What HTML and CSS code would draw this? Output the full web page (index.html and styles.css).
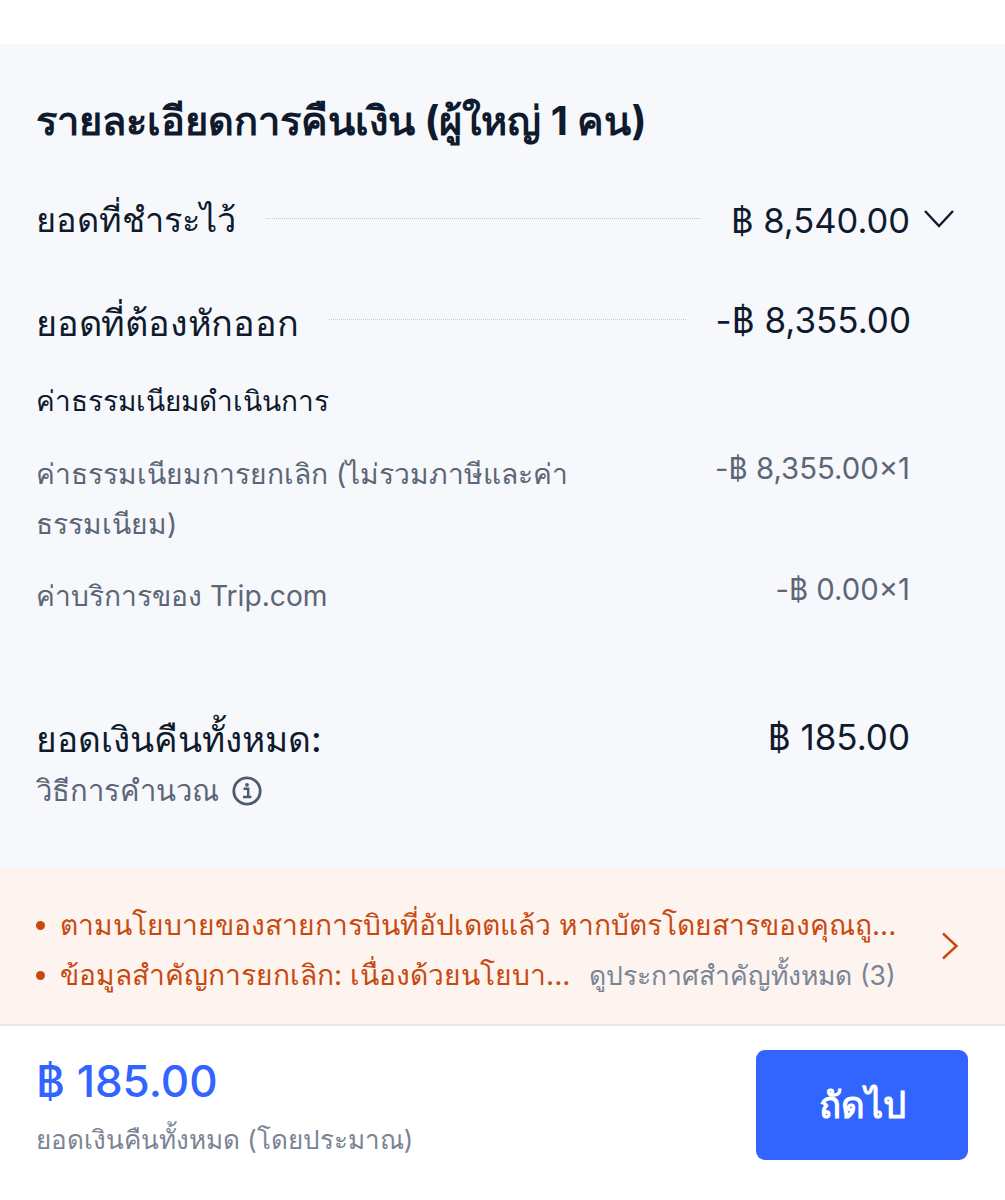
FILE: index.html
```html
<!DOCTYPE html>
<html lang="th">
<head>
    <meta charset="UTF-8">
    <meta name="viewport" content="width=device-width, initial-scale=1.0">
    <title>รายละเอียดการคืนเงิน</title>
    <link rel="stylesheet" href="styles.css">
</head>
<body>
    <div class="top-gap"></div>
    <div class="details">
        <h1>รายละเอียดการคืนเงิน (ผู้ใหญ่ 1 คน)</h1>

        <div class="row row-paid">
            <span class="row-label">ยอดที่ชำระไว้</span>
            <span class="dots"></span>
            <span class="row-amount">฿ 8,540.00</span>
            <svg class="chevron-down" viewBox="0 0 32 20" width="32" height="20"><path d="M2 2 L16 17 L30 2" fill="none" stroke="#0f1b2d" stroke-width="2.4"/></svg>
        </div>

        <div class="row row-deduct">
            <span class="row-label">ยอดที่ต้องหักออก</span>
            <span class="dots"></span>
            <span class="row-amount">-฿ 8,355.00</span>
        </div>

        <div class="fee-title">ค่าธรรมเนียมดำเนินการ</div>
        <div class="fee fee-cancel">
            <span class="fee-name">ค่าธรรมเนียมการยกเลิก (ไม่รวมภาษีและค่าธรรมเนียม)</span>
            <span class="fee-amount">-฿ 8,355.00×1</span>
        </div>
        <div class="fee fee-service">
            <span class="fee-name">ค่าบริการของ Trip.com</span>
            <span class="fee-amount">-฿ 0.00×1</span>
        </div>

        <div class="total">
            <span class="total-label">ยอดเงินคืนทั้งหมด:</span>
            <span class="total-amount">฿ 185.00</span>
        </div>
        <div class="calc">
            วิธีการคำนวณ
            <svg class="info" viewBox="0 0 30 30" width="30" height="30">
                <circle cx="15" cy="15" r="13.2" fill="none" stroke="#4f5a6b" stroke-width="2.8"/>
                <circle cx="15" cy="8.8" r="1.9" fill="#4f5a6b"/>
                <path d="M11.5 12.8 H16.2 V20.6 M11 21 H19.4" fill="none" stroke="#4f5a6b" stroke-width="2.4"/>
            </svg>
        </div>
    </div>

    <div class="notice">
        <div class="notice-lines">
            <div class="notice-line"><span class="bullet"></span><span class="notice-text">ตามนโยบายของสายการบินที่อัปเดตแล้ว หากบัตรโดยสารของคุณถู...</span></div>
            <div class="notice-line"><span class="bullet"></span><span class="notice-text">ข้อมูลสำคัญการยกเลิก: เนื่องด้วยนโยบา...</span><span class="notice-all">ดูประกาศสำคัญทั้งหมด (3)</span></div>
        </div>
        <svg class="chevron-right" viewBox="0 0 18 28" width="18" height="28"><path d="M2 1.5 L15.5 14 L2 26.5" fill="none" stroke="#c8490f" stroke-width="2.4"/></svg>
    </div>

    <div class="footer">
        <div class="footer-price">
            <div class="footer-amount">฿ 185.00</div>
            <div class="footer-note">ยอดเงินคืนทั้งหมด (โดยประมาณ)</div>
        </div>
        <button class="next-btn">ถัดไป</button>
    </div>
</body>
</html>
```

FILE: styles.css
```css
body {
    margin: 0;
    padding: 0;
    background-color: #ffffff;
    color: #0f1b2d;
    font-family: "Inter", "Noto Sans", "Liberation Sans", sans-serif;
}

.top-gap {
    height: 44px;
}

.details {
    background-color: #f6f8fc;
    height: 824px;
    box-sizing: border-box;
    padding: 52px 94px 0 36px;
}

h1 {
    margin: 0 0 47px 0;
    font-size: 39.8px;
    line-height: 50px;
    font-weight: 700;
}

.row {
    display: flex;
    align-items: center;
    height: 50px;
}

.row-label {
    font-size: 34.3px;
    font-weight: 500;
    padding-top: 4px;
}

.row-amount {
    font-size: 34.5px;
    white-space: nowrap;
    padding-top: 4px;
}

.dots {
    flex: 1;
    border-top: 1px dotted #c4c8cf;
    margin: 0 30px;
}

.row-paid {
    margin-right: -44px;
}

.row-paid .row-amount {
    margin-right: 13px;
}

.chevron-down {
    margin-top: 2px;
}

.row-deduct {
    margin-top: 51px;
}

.row-deduct .row-label {
    font-size: 36px;
    letter-spacing: -0.2px;
    padding-top: 8px;
}

.row-deduct .row-amount {
    font-size: 35px;
    padding-top: 2px;
}

.fee-title {
    margin-top: 37px;
    font-size: 28px;
    line-height: 40px;
    font-weight: 500;
}

.fee {
    display: flex;
    justify-content: space-between;
    font-size: 28.2px;
    line-height: 50px;
    color: #5c6676;
}

.fee-name {
    width: 540px;
}

.fee-amount {
    font-size: 29.3px;
    margin-top: -5px;
    padding-right: 1px;
}

.fee-cancel {
    margin-top: 28px;
}

.fee-service {
    margin-top: 22px;
}

.fee-service .fee-amount {
    margin-top: -6px;
}

.total {
    display: flex;
    justify-content: space-between;
    margin-top: 93px;
    font-size: 35.2px;
    line-height: 50px;
    font-weight: 500;
}

.total-amount {
    font-size: 35px;
    font-weight: 400;
    margin-top: -2px;
    padding-right: 1px;
}

.calc {
    display: flex;
    align-items: center;
    gap: 13px;
    margin-top: 5px;
    font-size: 29.2px;
    line-height: 44px;
    color: #5c6676;
}

.notice {
    display: flex;
    align-items: center;
    justify-content: space-between;
    height: 158px;
    box-sizing: border-box;
    padding: 8px 46px 0 36px;
    background-color: #fdf4f0;
    border-bottom: 2px solid #e8e6e6;
}

.notice-line {
    display: flex;
    align-items: center;
    font-size: 28.2px;
    line-height: 50px;
    color: #c8490f;
}

.bullet {
    width: 9px;
    height: 9px;
    border-radius: 50%;
    background-color: #c8490f;
    margin-right: 15px;
}

.notice-all {
    margin-left: 19px;
    font-size: 26.5px;
    color: #7b8494;
}

.chevron-right {
    margin-top: -8px;
}

.footer {
    display: flex;
    align-items: flex-start;
    justify-content: space-between;
    padding: 24px 37px 0 36px;
}

.footer-amount {
    font-size: 44px;
    line-height: 62px;
    font-weight: 500;
    color: #3264ff;
}

.footer-note {
    margin-top: 8px;
    font-size: 26px;
    line-height: 40px;
    color: #7b8494;
}

.next-btn {
    width: 212px;
    height: 110px;
    border: none;
    border-radius: 9px;
    background-color: #3264ff;
    color: #ffffff;
    font-family: inherit;
    font-size: 36.5px;
    font-weight: 600;
}
```
